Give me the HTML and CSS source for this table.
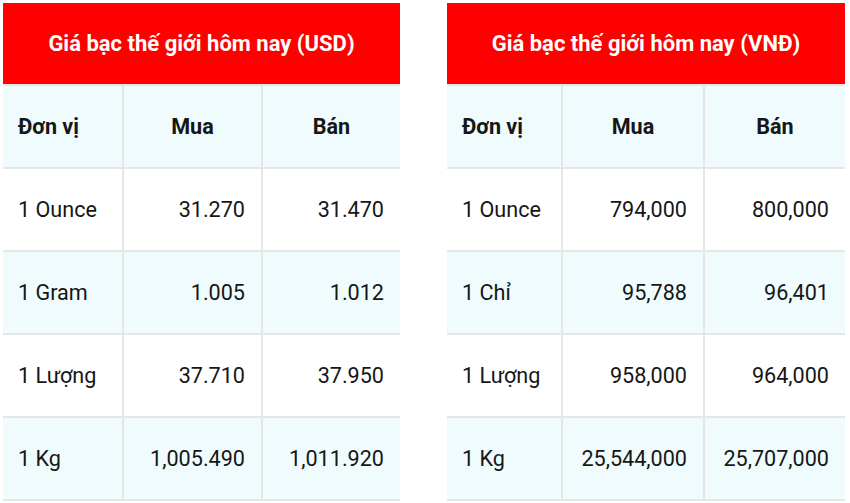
FILE: index.html
```html
<!DOCTYPE html>
<html lang="vi">
<head>
<meta charset="utf-8">
<link rel="stylesheet" href="styles.css">
</head>
<body>
<div class="page">
  <div class="table usd">
    <div class="title">Giá bạc thế giới hôm nay (USD)</div>
    <div class="cell th left alt">Đơn vị</div>
    <div class="cell th center alt">Mua</div>
    <div class="cell th center alt">Bán</div>
    <div class="cell left">1 Ounce</div>
    <div class="cell num">31.270</div>
    <div class="cell num">31.470</div>
    <div class="cell left alt">1 Gram</div>
    <div class="cell num alt">1.005</div>
    <div class="cell num alt">1.012</div>
    <div class="cell left">1 Lượng</div>
    <div class="cell num">37.710</div>
    <div class="cell num">37.950</div>
    <div class="cell left alt">1 Kg</div>
    <div class="cell num alt">1,005.490</div>
    <div class="cell num alt">1,011.920</div>
  </div>
  <div class="table vnd">
    <div class="title">Giá bạc thế giới hôm nay (VNĐ)</div>
    <div class="cell th left alt">Đơn vị</div>
    <div class="cell th center alt">Mua</div>
    <div class="cell th center alt">Bán</div>
    <div class="cell left">1 Ounce</div>
    <div class="cell num">794,000</div>
    <div class="cell num">800,000</div>
    <div class="cell left alt">1 Chỉ</div>
    <div class="cell num alt">95,788</div>
    <div class="cell num alt">96,401</div>
    <div class="cell left">1 Lượng</div>
    <div class="cell num">958,000</div>
    <div class="cell num">964,000</div>
    <div class="cell left alt">1 Kg</div>
    <div class="cell num alt">25,544,000</div>
    <div class="cell num alt">25,707,000</div>
  </div>
</div>
</body>
</html>
```
FILE: styles.css
```css
html, body {
  margin: 0;
  padding: 0;
  background: #ffffff;
}
body {
  font-family: Roboto, "Liberation Sans", Arial, sans-serif;
  color: #161616;
  width: 850px;
  height: 503px;
  overflow: hidden;
}
.page {
  display: flex;
  padding: 3px 0 0 3px;
  gap: 47px;
}
.table {
  display: grid;
  grid-auto-rows: 81px;
  gap: 2px;
  background: #e6e6e6;
  padding-bottom: 2px;
}
.usd {
  grid-template-columns: 119px 137px 137px;
}
.vnd {
  grid-template-columns: 114px 140px 140px;
}
.title {
  grid-column: 1 / -1;
  background: #fe0000;
  color: #ffffff;
  font-weight: 700;
  font-size: 22px;
  display: flex;
  align-items: center;
  justify-content: center;
  padding-bottom: 1px;
}
.cell {
  background: #ffffff;
  display: flex;
  align-items: center;
  font-size: 21.6px;
}
.cell.alt {
  background: #effbfd;
}
.th {
  font-weight: 700;
}
.left {
  padding-left: 15px;
}
.center {
  justify-content: center;
}
.num {
  justify-content: flex-end;
  padding-right: 16px;
}
```
